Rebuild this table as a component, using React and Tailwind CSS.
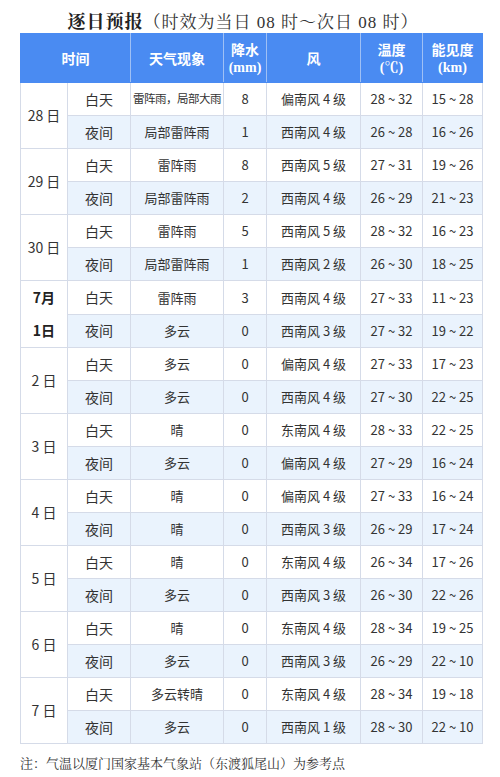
const days = [
  {
    date: "28 日",
    rows: [
      ["白天", "雷阵雨，局部大雨", "8", "偏南风 4 级", "28 ~ 32", "15 ~ 28"],
      ["夜间", "局部雷阵雨", "1", "西南风 4 级", "26 ~ 28", "16 ~ 26"],
    ],
  },
  {
    date: "29 日",
    rows: [
      ["白天", "雷阵雨", "8", "西南风 5 级", "27 ~ 31", "19 ~ 26"],
      ["夜间", "局部雷阵雨", "2", "西南风 4 级", "26 ~ 29", "21 ~ 23"],
    ],
  },
  {
    date: "30 日",
    rows: [
      ["白天", "雷阵雨", "5", "西南风 5 级", "28 ~ 32", "16 ~ 23"],
      ["夜间", "局部雷阵雨", "1", "西南风 2 级", "26 ~ 30", "18 ~ 25"],
    ],
  },
  {
    split: ["7月", "1日"],
    rows: [
      ["白天", "雷阵雨", "3", "西南风 4 级", "27 ~ 33", "11 ~ 23"],
      ["夜间", "多云", "0", "西南风 3 级", "27 ~ 32", "19 ~ 22"],
    ],
  },
  {
    date: "2 日",
    rows: [
      ["白天", "多云", "0", "偏南风 4 级", "27 ~ 33", "17 ~ 23"],
      ["夜间", "多云", "0", "西南风 4 级", "27 ~ 30", "22 ~ 25"],
    ],
  },
  {
    date: "3 日",
    rows: [
      ["白天", "晴", "0", "东南风 4 级", "28 ~ 33", "22 ~ 25"],
      ["夜间", "多云", "0", "偏南风 4 级", "27 ~ 29", "16 ~ 24"],
    ],
  },
  {
    date: "4 日",
    rows: [
      ["白天", "晴", "0", "偏南风 4 级", "27 ~ 33", "16 ~ 24"],
      ["夜间", "晴", "0", "西南风 3 级", "26 ~ 29", "17 ~ 24"],
    ],
  },
  {
    date: "5 日",
    rows: [
      ["白天", "晴", "0", "东南风 4 级", "26 ~ 34", "17 ~ 26"],
      ["夜间", "多云", "0", "西南风 3 级", "26 ~ 30", "22 ~ 26"],
    ],
  },
  {
    date: "6 日",
    rows: [
      ["白天", "晴", "0", "东南风 4 级", "28 ~ 34", "19 ~ 25"],
      ["夜间", "多云", "0", "西南风 3 级", "26 ~ 29", "22 ~ 10"],
    ],
  },
  {
    date: "7 日",
    rows: [
      ["白天", "多云转晴", "0", "东南风 4 级", "28 ~ 34", "19 ~ 18"],
      ["夜间", "多云", "0", "西南风 1 级", "28 ~ 30", "22 ~ 10"],
    ],
  },
];

const sans = { fontFamily: '"Noto Sans CJK SC", "Noto Sans", sans-serif' };
const serif = { fontFamily: '"Liberation Serif", "Noto Serif CJK SC", "Noto Sans CJK SC", serif' };

const cell = "border border-[#d5dbe8] text-center align-middle p-0";

export default function App() {
  return (
    <div className="w-[500px] h-[777px] bg-white text-[#333]" style={sans}>
      <div className="h-[33px] flex items-end justify-center pb-[2px] pr-[14px]">
        <span className="text-[18px] font-bold leading-none text-[#222] tracking-[1px]" style={serif}>
          逐日预报
        </span>
        <span className="text-[17px] leading-none text-[#333] tracking-[1px]" style={serif}>
          （时效为当日 08 时～次日 08 时）
        </span>
      </div>

      <table className="ml-[20px] w-[462px] table-fixed border-collapse">
        <colgroup>
          <col className="w-[47px]" />
          <col className="w-[63px]" />
          <col className="w-[93px]" />
          <col className="w-[43px]" />
          <col className="w-[94px]" />
          <col className="w-[62px]" />
          <col className="w-[60px]" />
        </colgroup>
        <thead>
          <tr className="h-[49px] bg-[#4a8bf2] text-white font-bold text-[14px] leading-[17px]">
            <th colSpan={2} className="border border-[#4a8bf2] border-r-[#9fc0f5] font-bold">时间</th>
            <th className="border border-[#4a8bf2] border-r-[#9fc0f5] font-bold">天气现象</th>
            <th className="border border-[#4a8bf2] border-r-[#9fc0f5] font-bold">
              降水
              <br />
              <span style={serif}>(mm)</span>
            </th>
            <th className="border border-[#4a8bf2] border-r-[#9fc0f5] font-bold">风</th>
            <th className="border border-[#4a8bf2] border-r-[#9fc0f5] font-bold">
              温度
              <br />
              <span style={serif}>(℃)</span>
            </th>
            <th className="border border-[#4a8bf2] font-bold">
              能见度
              <br />
              <span style={serif}>(km)</span>
            </th>
          </tr>
        </thead>
        <tbody className="text-[13px]">
          {days.map((d, di) =>
            d.rows.map((r, ri) => (
              <tr key={di + "-" + ri} className={ri === 0 ? "h-[33px] bg-white" : "h-[33px] bg-[#eaf3fd]"}>
                {ri === 0 &&
                  (d.split ? (
                    <td rowSpan={2} className={cell + " bg-white font-bold text-[14px] text-[#222]"}>
                      <div className="flex flex-col leading-[33px]">
                        <span>{d.split[0]}</span>
                        <span>{d.split[1]}</span>
                      </div>
                    </td>
                  ) : (
                    <td rowSpan={2} className={cell + " bg-white text-[14px]"}>
                      {d.date}
                    </td>
                  ))}
                {r.map((v, vi) => (
                  <td
                    key={vi}
                    className={
                      cell +
                      (vi === 0 ? " text-[14px]" : "") +
                      (vi === 1 && v.length > 6 ? " text-[11.5px] tracking-[-0.5px] whitespace-nowrap" : "")
                    }
                  >
                    {v}
                  </td>
                ))}
              </tr>
            ))
          )}
        </tbody>
      </table>

      <div className="mt-[10px] ml-[20px] text-[13px] text-[#333]" style={serif}>
        注：气温以厦门国家基本气象站（东渡狐尾山）为参考点
      </div>
    </div>
  );
}
